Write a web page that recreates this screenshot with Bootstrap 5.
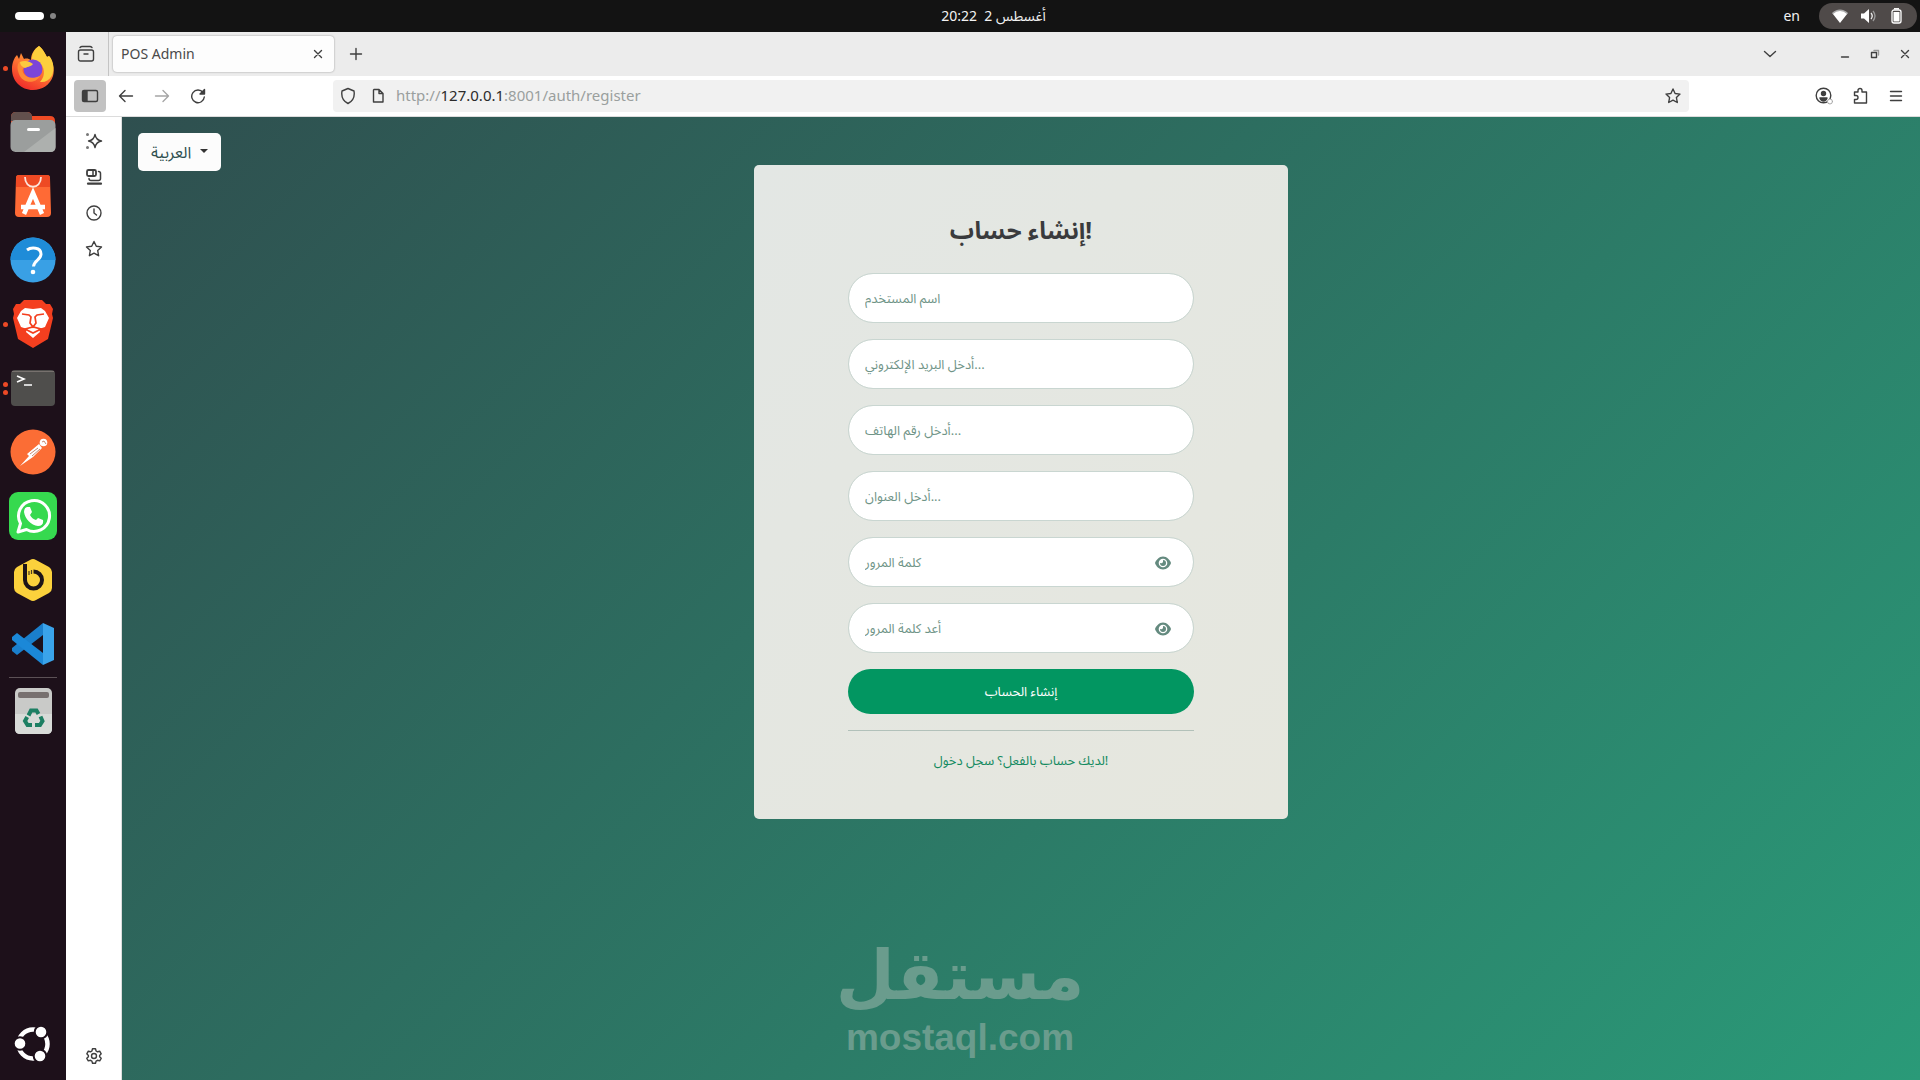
<!DOCTYPE html>
<html lang="en">
<head>
<meta charset="utf-8">
<meta name="viewport" content="width=device-width, initial-scale=1">
<title>POS Admin</title>
<link href="https://cdn.jsdelivr.net/npm/bootstrap@5.3.0/dist/css/bootstrap.min.css" rel="stylesheet">
<style>
  body { font-family: "Noto Sans", "Noto Sans Arabic", "DejaVu Sans", sans-serif; background: #1d101a; }
  svg { display: block; flex: none; }
  .line-icon { fill: none; stroke: #3f3f3f; stroke-width: 1.4; stroke-linecap: round; stroke-linejoin: round; }

  .shell-bar { display: grid; grid-template-columns: 1fr auto 1fr; height: 32px; background: #131313; color: #f2f2f2; font-size: 14px; line-height: 20px; }
  .shell-start { padding-left: 15px; gap: 6px; }
  .shell-clock { margin-left: 67px; padding-bottom: 1px; white-space: pre; }
  .shell-end { gap: 19px; }
  .ws-active { width: 29px; height: 8px; border-radius: 4px; background: #fff; }
  .ws-idle { width: 6px; height: 6px; border-radius: 50%; background: #858585; }
  .status-pill { height: 26px; width: 98px; border-radius: 13px; background: #4f4a49; margin-right: 3px; }

  .dock { width: 66px; background: #1d101a; padding: 4px 0; }
  .dock-slot { position: relative; display: flex; align-items: center; justify-content: center; width: 66px; height: 64px; border: 0; padding: 0; background: none; }
  .dock-rule { height: 1px; width: 48px; margin: 1px auto; background: #5c5156; }
  .run-dots { position: absolute; left: 3px; top: 0; bottom: 0; display: flex; flex-direction: column; justify-content: center; gap: 3px; }
  .run-dots i { width: 5px; height: 5px; border-radius: 50%; background: #ed4a26; }

  .plain-btn { border: 0; background: none; padding: 0; display: flex; align-items: center; justify-content: center; }
  .tab-strip { height: 44px; background: #ececec; }
  .tab-list-btn { width: 43px; height: 44px; padding-right: 2px; border-right: 1px solid #c4c4c4; }
  .page-tab { width: 221px; height: 36px; margin-left: 4px; padding: 0 10px 0 8px; border-radius: 4px; background: #fdfdfd; box-shadow: 0 0 2px rgba(0,0,0,.4); font-size: 14px; color: #4a4a4a; }
  .page-tab span { padding-bottom: 2px; }
  .tabs-menu { margin-right: 42px; }
  .win-btn { width: 30px; height: 44px; }
  .tool-strip { height: 41px; background: #fff; border-bottom: 1px solid #dcdcdc; padding: 0 6px 0 8px; }
  .side-toggle { width: 32px; height: 32px; margin-right: 2px; border-radius: 4px; background: #c2c2c2; }
  .nav-btn { width: 36px; height: 32px; }
  .tool-gap { max-width: 117px; }
  .url-box { height: 32px; border-radius: 4px; background: #f1f1f1; padding: 0 8px 0 7px; }
  .url-text { font-size: 15px; line-height: 20px; padding-bottom: 2px; color: #9a9f9e; }
  .url-text b { font-weight: 400; color: #2b2b2b; }
  .side-strip { width: 56px; background: #fff; padding: 6px 0 6px; border-right: 1px solid #ddd; }
  .side-btn { width: 56px; height: 36px; }

  .page-area { background: linear-gradient(135deg, #2f4f4f 0%, #2a9a78 100%); padding: 16px; }
  .lang-btn { height: 38px; padding: 0 12px; font-size: 16px; background: #fcfcfc; color: #2f4f4f; border-radius: 5px; }
  .lang-btn::after { color: #333; margin-left: 9px; vertical-align: 5px; }
  .lang-slot { height: 32px; }
  .reg-panel { width: 534px; padding: 48px 94px; border-radius: 5px; background: linear-gradient(135deg, #e3e7e4, #e6e7de); }
  .reg-title { font-size: 24px; line-height: 34px; font-weight: 700; color: #3a3b3d; margin-bottom: 26px; }
  .user-field { height: 50px; padding: 0 16px; border-radius: 25px; border: 1px solid #c9d6d1; font-size: 13px; }
  .user-field::placeholder { color: #6f9487; }
  .field-stack { gap: 16px; }
  .eye-btn { position: absolute; right: 22px; top: 17px; width: 18px; height: 17px; }
  .send-btn { height: 45px; border-radius: 23px; background: #029661; color: #fff; font-size: 13px; }
  .reg-rule { margin: 0; height: 1px; color: #8fa9a0; opacity: .6; }
  .login-link { font-size: 13px; line-height: 20px; color: #138a60; text-decoration: none; }
  .page-mark { color: #6a9c8d; font-weight: 700; bottom: 20px; left: 0; right: 122px; margin: 0 auto; width: 280px; }
  .mark-ar { font-family: "DejaVu Sans", sans-serif; font-size: 68px; line-height: 80px; }
  .mark-en { font-family: "Liberation Sans", sans-serif; font-size: 37px; line-height: 44px; }
</style>
<script src="https://cdn.jsdelivr.net/npm/bootstrap@5.3.0/dist/js/bootstrap.bundle.min.js"></script>
</head>
<body class="d-flex flex-column vh-100 overflow-hidden">
<header class="shell-bar align-items-center">
  <div class="shell-start d-flex align-items-center"><span class="ws-active"></span><span class="ws-idle"></span></div>
  <div class="shell-clock">20:22  2 أغسطس</div>
  <div class="shell-end d-flex align-items-center justify-content-end">
    <span>en</span>
    <div class="status-pill d-flex align-items-center justify-content-center gap-2">
      <svg width="20" height="16" viewBox="0 0 20 16"><path d="M10 15 2.500 5.500C7 1 13 1 17.500 5.500Z" fill="#fff"/><path d="M2.500 5.500C7 1 13 1 17.500 5.500" fill="none" stroke="#aaa" stroke-width="1.500"/></svg>
      <svg width="20" height="16" viewBox="0 0 20 16"><path d="M3 5.500h3l5-4.500v14l-5-4.500H3z" fill="#fff"/><path d="M13 5q2.500 3 0 6" fill="none" stroke="#eee" stroke-width="1.300"/><path d="M15 3q4 5 0 10" fill="none" stroke="#999" stroke-width="1.300"/></svg>
      <svg width="20" height="16" viewBox="0 0 20 16"><rect x="6" y="2" width="9" height="13" rx="2" fill="none" stroke="#fff" stroke-width="1.300"/><path d="M8 .8h5" stroke="#fff" stroke-width="1.500"/><rect x="7.500" y="4" width="6" height="9.500" fill="#fff"/></svg>
    </div>
  </div>
</header>

<div class="d-flex flex-grow-1">
  <nav class="dock d-flex flex-column" aria-label="Dock">
    <button class="dock-slot" aria-label="Firefox"><span class="run-dots"><i></i></span>
      <svg width="44" height="46" viewBox="0 0 44 46"><defs><linearGradient id="ff" x1=".8" y1="0" x2=".3" y2="1"><stop offset="0" stop-color="#ffc42e"/><stop offset=".5" stop-color="#ff7a33"/><stop offset="1" stop-color="#f02a2a"/></linearGradient></defs><path d="M28 1c5 4 6 8 8 11l2-1c4 5 6 14 4 20C39 40 31 45 22 45 10 45 1 36 1 24c0-6 2-11 5-14l2 4 2-6 3 6c3-1 5 0 7 1 0-6 3-11 8-14z" fill="url(#ff)"/><path d="M28 1c-5 4-7 8-7 13l9 5c5 6 3 14-1 18 10 1 15-8 13-18-1-4-2-6-4-8l-2 1c-2-3-3-7-8-11z" fill="#fccf3d"/><circle cx="22" cy="24" r="9.500" fill="#7c45d8"/><path d="M8 17c5-2 8-1 13 2l-5 3c-4 0-6 3-3 7 3 4 9 5 16 2-5 9-18 7-21-2-2-5-2-8 0-12z" fill="#ff8a35"/><path d="M9 17c5-2 9-1 13 2-2 3-7 3-8 4-3-1-5-3-5-6z" fill="#fdc93f"/></svg></button>
    <button class="dock-slot" aria-label="Files"><svg width="46" height="42" viewBox="0 0 46 42"><path d="M1 6q0-5 5-5h11q4 0 5 4h18q5 0 5 5v14H1z" fill="#ee4b25"/><path d="M1 6q0-5 5-5h11q4 0 5 4v5H1z" fill="#62504d"/><rect x=".5" y="9" width="45" height="32" rx="5" fill="#9b9e9d"/><path d="M45.500 17v19q0 5-5 5H14z" fill="#adb0ae"/><rect x="17" y="17" width="13" height="3" rx="1.500" fill="#fff"/></svg></button>
    <button class="dock-slot" aria-label="App Center"><svg width="36" height="42" viewBox="0 0 36 42"><path d="M4 0h28q3 0 3 3l1 35q0 4-4 4H4q-4 0-4-4L1 3q0-3 3-3z" fill="#ff6a35"/><path d="M4 0h28q3 0 3 3v9H1V3q0-3 3-3z" fill="#ee4a24"/><path d="M10 2c0 13 16 13 16 0" fill="none" stroke="#fbe4dc" stroke-width="1.800"/><path d="M9 39 18 18l9 21M6 32h24" fill="none" stroke="#fff" stroke-width="4.500"/></svg></button>
    <button class="dock-slot" aria-label="Help"><svg width="46" height="46" viewBox="0 0 46 46"><circle cx="23" cy="23" r="22.500" fill="#39a0e5"/><path d="M.5 23a22.500 22.500 0 0 1 45 0z" fill="#1f8cd8"/><path d="M17 13c4-3 14-3 14 4 0 6-7 6-7.500 12.500" fill="none" stroke="#fff" stroke-width="3"/><circle cx="23" cy="35" r="2.300" fill="#fff"/></svg></button>
    <button class="dock-slot" aria-label="Brave"><span class="run-dots"><i></i></span>
      <svg width="42" height="48" viewBox="0 0 42 48"><path d="M12 0h18l4 4 4 0 3 5-1 5 1 4-5 21-15 9-15-9L1 18l1-4-1-5 3-5h4z" fill="#f43f1f"/><path d="M13 8l8 1 8-1 4 3 4 7-4 9-6 2 1 3-7 6-7-6 1-3-6-2-4-9 4-7z" fill="#fff"/><path d="M10 14l7 1 2 2-1 6 3 4 3-4-1-6 2-2 7-1M13 29l8-2 8 2-8 4z" fill="none" stroke="#f43f1f" stroke-width="1.700"/></svg></button>
    <button class="dock-slot" aria-label="Terminal"><span class="run-dots"><i></i><i></i></span>
      <svg width="44" height="36" viewBox="0 0 44 36"><rect width="44" height="36" rx="4" fill="#4f4e4c"/><path d="M1 1.500h42" stroke="#77716e"/><path d="M6 6l7 3-7 3M13 15h8" fill="none" stroke="#fff" stroke-width="1.600"/></svg></button>
    <button class="dock-slot" aria-label="Postman"><svg width="46" height="46" viewBox="0 0 46 46"><circle cx="23" cy="23" r="22.500" fill="#fb6d35"/><path d="M10 37l9-10-2-2 12-10 3 4-9 9z" fill="#fff"/><circle cx="33.500" cy="13.500" r="3.800" fill="#fff"/><path d="M20 25l8-6M22 27l8-7M32 13l2-1 2 3" stroke="#b86a4a" stroke-width=".8" fill="none"/></svg></button>
    <button class="dock-slot" aria-label="WhatsApp"><svg width="48" height="48" viewBox="0 0 48 48"><rect width="48" height="48" rx="9" fill="#36d94f"/><path d="M9 40l2.500-8.500a15.500 15.500 0 1 1 6 6z" fill="none" stroke="#fff" stroke-width="3" stroke-linejoin="round"/><path d="M18 15l3 0 2 5-2 3q2 4 6 5l2-2 5 2q1 6-5 6C22 33 16 27 15 20q0-4 3-5z" fill="#fff"/></svg></button>
    <button class="dock-slot" aria-label="Beekeeper Studio"><svg width="38" height="42" viewBox="0 0 38 42"><path d="M16 1q3-2 6 0l13 7q3 2 3 5v16q0 3-3 5l-13 7q-3 2-6 0L3 34q-3-2-3-5V13q0-3 3-5z" fill="#fbd13c"/><path d="M11 5v16a8.500 8.500 0 1 0 8.500-8.500" fill="none" stroke="#1d1418" stroke-width="4"/><path d="M15 12v4M17.500 11v4" stroke="#4d3c20" stroke-width="1.200"/></svg></button>
    <button class="dock-slot" aria-label="Visual Studio Code"><svg width="42" height="42" viewBox="0 0 42 42"><path d="M31 0v12L5 32l-5-4v-3L31 0z" fill="#1a7fcc"/><path d="M31 42V30L5 10l-5 4v3L31 42z" fill="#1b88d8"/><path d="M31 0l11 5v32l-11 5z" fill="#3aa3ea"/></svg></button>
    <div class="dock-rule"></div>
    <button class="dock-slot" aria-label="Trash"><svg width="37" height="46" viewBox="0 0 37 46"><rect width="37" height="46" rx="5" fill="#c9cac8"/><path d="M0 26h37v15q0 5-5 5H5q-5 0-5-5z" fill="#d8dbd8"/><rect x="3" y="4" width="31" height="6" rx="2" fill="#77706f"/><g fill="none" stroke="#1d7f63" stroke-width="4"><path d="M13.500 27.500 16 22.500h5.500l2 3.500"/><path d="M25.500 28.500l2 4.500-2.500 4h-5"/><path d="M17 37h-4.500L10 33l2.200-4"/></g></svg></button>
    <button class="dock-slot mt-auto" aria-label="Show Apps"><svg width="38" height="38" viewBox="0 0 38 38"><circle cx="19" cy="19" r="14.500" fill="none" stroke="#fff" stroke-width="4.500"/><g fill="#fff" stroke="#1d101a" stroke-width="2"><circle cx="6" cy="18.500" r="6.300"/><circle cx="27" cy="7" r="6.300"/><circle cx="26" cy="31" r="6.300"/></g></svg></button>
  </nav>

  <div class="d-flex flex-column flex-grow-1">
    <div class="tab-strip d-flex align-items-center">
      <button class="plain-btn tab-list-btn" aria-label="All tabs"><svg class="line-icon" width="18" height="18" viewBox="0 0 18 18"><rect x="1.500" y="5" width="15" height="11" rx="2"/><path d="M3 2.500q1-1 2-1h8q1 0 2 1M7 9h4"/></svg></button>
      <div class="page-tab d-flex align-items-center justify-content-between"><span>POS Admin</span>
        <button class="plain-btn" aria-label="Close tab"><svg class="line-icon" width="12" height="12" viewBox="0 0 12 12"><path d="M2.500 2.500l7 7m0-7l-7 7"/></svg></button></div>
      <button class="plain-btn nav-btn ms-1" aria-label="New tab"><svg class="line-icon" width="14" height="14" viewBox="0 0 14 14"><path d="M7 1.500v11M1.500 7h11"/></svg></button>
      <div class="d-flex ms-auto align-items-center">
        <button class="plain-btn nav-btn tabs-menu" aria-label="List tabs"><svg class="line-icon" width="14" height="14" viewBox="0 0 14 14"><path d="M1.500 4.500l5.500 5 5.500-5"/></svg></button>
        <button class="plain-btn win-btn" aria-label="Minimise"><svg class="line-icon" width="10" height="10" viewBox="0 0 10 10"><path d="M1.500 8h7"/></svg></button>
        <button class="plain-btn win-btn" aria-label="Restore"><svg class="line-icon" width="10" height="10" viewBox="0 0 10 10"><path d="M1.500 3.500h5v5h-5z"/><path d="M4 1.500h4.500V6" stroke="#999"/></svg></button>
        <button class="plain-btn win-btn" aria-label="Close"><svg class="line-icon" width="10" height="10" viewBox="0 0 10 10"><path d="M1.500 1.500l7 7m0-7l-7 7"/></svg></button>
      </div>
    </div>
    <div class="tool-strip d-flex align-items-center">
      <button class="plain-btn side-toggle" aria-label="Sidebar"><svg class="line-icon" width="18" height="14" viewBox="0 0 18 14"><rect x="1.500" y="1.500" width="15" height="11" rx="1.500"/><path d="M2 2h4v10H2z" fill="#3f3f3f"/></svg></button>
      <button class="plain-btn nav-btn" aria-label="Back"><svg class="line-icon" width="16" height="14" viewBox="0 0 16 14"><path d="M7 1.500L1.500 7 7 12.500M1.500 7h13"/></svg></button>
      <button class="plain-btn nav-btn" aria-label="Forward"><svg class="line-icon" width="16" height="14" viewBox="0 0 16 14"><path stroke="#a5a5a5" d="M9 1.500L14.500 7 9 12.500M14.500 7h-13"/></svg></button>
      <button class="plain-btn nav-btn" aria-label="Reload"><svg class="line-icon" width="16" height="16" viewBox="0 0 16 16"><path d="M13 4.500A6.300 6.300 0 1 0 14.300 9"/><path d="M14.500 1.500v4.500H10z" fill="#3f3f3f"/></svg></button>
      <div class="tool-gap flex-grow-1"></div>
      <div class="url-box d-flex align-items-center flex-grow-1">
        <svg class="line-icon" width="16" height="18" viewBox="0 0 16 18"><path d="M8 1.500l6 2.500c1 6-1 10-6 12.500C3 14 1 10 2 4z"/></svg>
        <svg class="line-icon ms-3 me-2" width="12" height="16" viewBox="0 0 12 16"><path d="M2 1.500h5L11 5.500v8.500h-9.500V2zM7 1.500V5.500h4"/></svg>
        <span class="url-text flex-grow-1 ms-1">http://<b>127.0.0.1</b>:8001/auth/register</span>
        <svg class="line-icon" width="16" height="16" viewBox="0 0 16 16"><path d="M8 1l2.100 4.500 4.900.6-3.600 3.400.9 5L8 12.100l-4.300 2.400.9-5L1 6.100l4.900-.6z"/></svg>
      </div>
      <div class="tool-gap flex-grow-1"></div>
      <button class="plain-btn nav-btn" aria-label="Account"><svg class="line-icon" width="18" height="18" viewBox="0 0 18 18"><circle cx="8.500" cy="8.500" r="7.300"/><circle cx="8.500" cy="6.500" r="2" fill="#3f3f3f"/><path d="M5 11h7q-1 3-3.500 3T5 11z" fill="#3f3f3f"/><circle cx="15" cy="14.500" r="2.500" fill="#fff" stroke="#aaa" stroke-width="1"/></svg></button>
      <button class="plain-btn nav-btn" aria-label="Extensions"><svg class="line-icon" width="16" height="18" viewBox="0 0 16 18"><path d="M6 5V3.500a2 2 0 0 1 4 0V5h4.500v11h-12v-3.500H4a2 2 0 0 0 0-4H2.500V5z"/></svg></button>
      <button class="plain-btn nav-btn" aria-label="Menu"><svg class="line-icon" width="14" height="14" viewBox="0 0 14 14"><path d="M1.500 2.500h11M1.500 7h11M1.500 11.500h11"/></svg></button>
    </div>
    <div class="d-flex flex-grow-1">
      <div class="side-strip d-flex flex-column">
        <button class="plain-btn side-btn" aria-label="Chatbot"><svg class="line-icon" width="18" height="18" viewBox="0 0 18 18"><path d="M10 2.500q1 5.500 6.500 6.500Q11 10 10 15.500 9 10 3.500 9 9 8 10 2.500z"/><path d="M2.500 2.500v.1M2.500 15.500v.1" stroke="#777" stroke-width="3"/></svg></button>
        <button class="plain-btn side-btn" aria-label="Synced tabs"><svg class="line-icon" width="18" height="18" viewBox="0 0 18 18"><rect x="2" y="2" width="9" height="6" rx="1.500" stroke-width="1.800"/><path d="M8 2.500v5M13.500 3.500q2 0 2 2v5q0 2-2 2H6q-2 0-2-2" stroke-width="1.500"/><path d="M3 15.700h13" stroke-width="2.200"/></svg></button>
        <button class="plain-btn side-btn" aria-label="History"><svg class="line-icon" width="18" height="18" viewBox="0 0 18 18"><circle cx="9" cy="9" r="7"/><path d="M9 5v4l2.500 2"/></svg></button>
        <button class="plain-btn side-btn" aria-label="Bookmarks"><svg class="line-icon" width="18" height="18" viewBox="0 0 18 18"><path d="M9 1.500l2.300 4.700 5.200.7-3.800 3.600.9 5.200L9 13.200l-4.600 2.500.9-5.200L1.500 6.900l5.200-.7z"/></svg></button>
        <button class="plain-btn side-btn mt-auto" aria-label="Settings"><svg class="line-icon" width="18" height="18" viewBox="0 0 18 18"><circle cx="9" cy="9" r="2.500"/><path d="M7.500 1.800h3l.6 2.200 1.400.8 2.200-.6 1.500 2.600L14.600 8.400v1.300l1.600 1.600-1.500 2.600-2.200-.6-1.400.8-.6 2.200h-3l-.6-2.200-1.400-.8-2.200.6-1.500-2.600 1.600-1.600V8.400L1.800 6.800l1.500-2.600 2.200.6L6.900 4z"/></svg></button>
      </div>

      <main class="page-area position-relative flex-grow-1">
        <div class="lang-slot dropdown"><button class="btn lang-btn dropdown-toggle" type="button" data-bs-toggle="dropdown">العربية</button></div>
        <form class="reg-panel mx-auto">
          <h1 class="reg-title text-center">إنشاء حساب!</h1>
          <div class="field-stack d-flex flex-column">
            <input class="form-control user-field" type="text" placeholder="اسم المستخدم" aria-label="اسم المستخدم">
            <input class="form-control user-field" type="email" placeholder="أدخل البريد الإلكتروني..." aria-label="أدخل البريد الإلكتروني">
            <input class="form-control user-field" type="tel" placeholder="أدخل رقم الهاتف..." aria-label="أدخل رقم الهاتف">
            <input class="form-control user-field" type="text" placeholder="أدخل العنوان..." aria-label="أدخل العنوان">
            <div class="position-relative">
              <input class="form-control user-field" type="password" placeholder="كلمة المرور" aria-label="كلمة المرور">
              <button class="plain-btn eye-btn" type="button" aria-label="Show password"><svg width="16" height="14" viewBox="0 0 16 14"><path d="M8 .5C12 .5 15 4 16 7c-1 3-4 6.500-8 6.500S1 10 0 7C1 4 4 .5 8 .5z" fill="#648a7f"/><circle cx="8" cy="7" r="4.300" fill="#fff"/><path d="M8 4a3 3 0 1 1-3 3l2 .3L8 6z" fill="#648a7f"/></svg></button>
            </div>
            <div class="position-relative">
              <input class="form-control user-field" type="password" placeholder="أعد كلمة المرور" aria-label="أعد كلمة المرور">
              <button class="plain-btn eye-btn" type="button" aria-label="Show password"><svg width="16" height="14" viewBox="0 0 16 14"><path d="M8 .5C12 .5 15 4 16 7c-1 3-4 6.500-8 6.500S1 10 0 7C1 4 4 .5 8 .5z" fill="#648a7f"/><circle cx="8" cy="7" r="4.300" fill="#fff"/><path d="M8 4a3 3 0 1 1-3 3l2 .3L8 6z" fill="#648a7f"/></svg></button>
            </div>
            <button class="btn send-btn w-100" type="submit">إنشاء الحساب</button>
            <hr class="reg-rule">
            <div class="text-center"><a class="login-link" href="#">لديك حساب بالفعل؟ سجل دخول!</a></div>
          </div>
        </form>
        <div class="page-mark position-absolute text-center text-nowrap">
          <div class="mark-ar">مستقل</div>
          <div class="mark-en">mostaql.com</div>
        </div>
      </main>
    </div>
  </div>
</div>
</body>
</html>
